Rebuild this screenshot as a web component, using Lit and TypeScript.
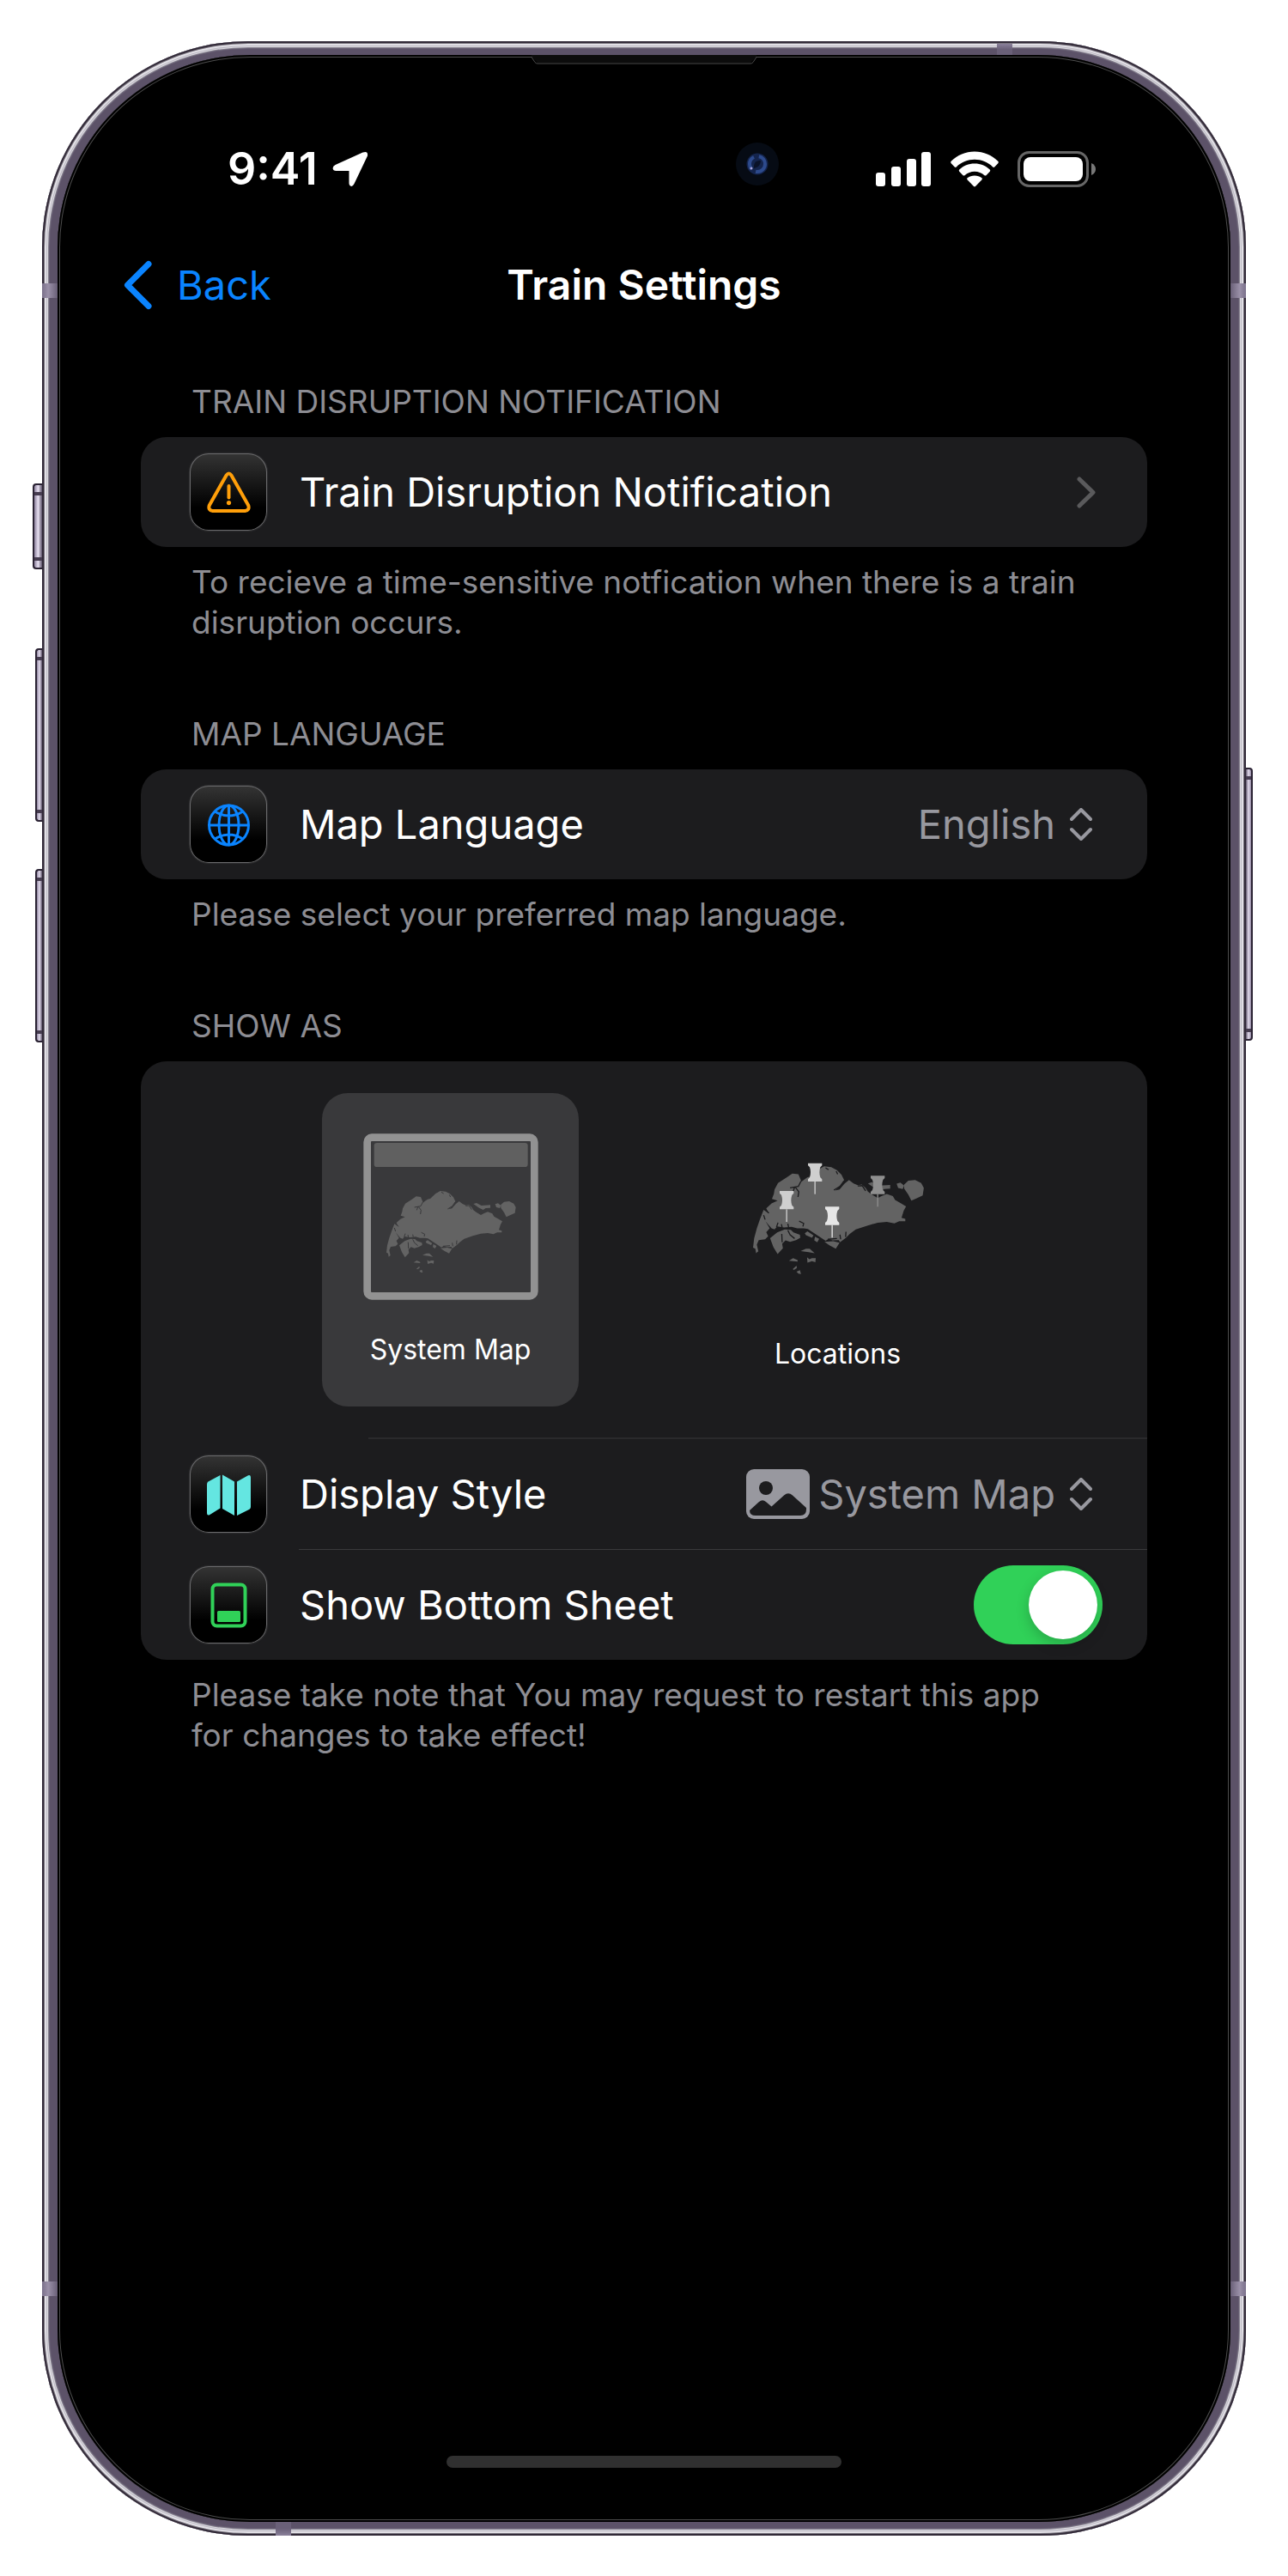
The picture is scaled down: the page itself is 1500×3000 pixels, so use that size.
import { LitElement, html, svg, css, type TemplateResult } from "lit";
import { customElement, property, state } from "lit/decorators.js";
import { classMap } from "lit/directives/class-map.js";

/* Outline of Singapore: main island, offshore islands and the inlets cut into the coast. */
const ISLANDS = [
  "M276 641 274 629 268 626 271 601 278 575 286 552 296 526 309 535 303 522 317 509 333 502 318 497 323 484 325 472 334 455 356 441 372 430 388 432 393 444 396 452 402 447 412 440 421 438 440 420 456 411 475 413 490 421 502 433 509 447 500 463 485 475 497 472 510 457 522 447 534 456 545 461 556 459 566 468 572 478 583 486 598 495 609 489 622 484 638 490 644 500 660 509 673 517 667 528 661 547 671 550 671 556 655 556 642 562 622 558 598 560 570 568 540 578 524 590 514 600 498 612 495 606 478 607 468 603 460 608 448 600 430 588 413 577 402 575 385 575 370 571 350 573 332 570 325 578 317 575 309 566 301 556 312 575 303 585 308 596 300 604 283 606 278 618 282 636Z",
  "M572 456 583 453 600 462 631 460 631 470 615 471 606 477 592 470Z",
  "M648 457 658 454 668 462 664 471 652 468Z",
  "M668 459 679 449 697 447 713 455 720 468 717 488 700 496 687 502 679 486 668 470Z",
  "M313 601 332 586 352 578 368 579 375 586 392 592 393 600 382 606 366 611 354 607 345 616 347 628 333 643 322 625Z",
  "M405 588 412 583 428 594 424 600 408 593Z",
  "M432 597 443 603 438 612 430 607Z",
  "M457 611 480 609 497 613 487 629 470 620Z",
  "M394 635 408 629 418 629 431 641 415 638Z",
  "M363 661 374 654 386 659 386 663Z",
  "M411 652 417 657 424 654 434 654 433 665 424 662 412 666Z",
  "M373 683 383 674 384 680 376 685Z",
  "M383 690 392 686 395 696 388 695Z",
].join("");
const INLETS =
  "M395 450 388 464 366 468M380 466 389 478 387 492M378 466 374 478M509 449 498 464 482 474M330 572 334 560M345 573 343 564M362 572 360 563M390 556 402 562 400 570M466 604 490 602M500 604 498 592M513 598 514 584M345 612 344 590M360 580 366 592 378 602M460 415 468 420M488 424 492 432M545 463 557 462 566 476M300 552 296 540M310 535 300 524";

const islandMap = svg`
  <path d=${ISLANDS} fill="#636363"></path>
  <path class="inlets" d=${INLETS} fill="none" stroke-width="3"></path>`;

const PINS = [
  { x: 302, y: 104, color: "#cfcfcf" },
  { x: 203, y: 201, color: "#cfcfcf" },
  { x: 362, y: 256, color: "#e6e6e6" },
  { x: 521, y: 148, color: "#8f8f8f" },
];

const systemMapArt = html`
  <svg class="art" width="204" height="194" viewBox="187 210 612 582" aria-hidden="true">
    <rect x="201" y="224" width="584" height="554" rx="16" fill="none" stroke="#929292" stroke-width="26"></rect>
    <rect x="225" y="243" width="537" height="84" rx="10" fill="#606060"></rect>
    ${islandMap}
  </svg>`;

const locationsArt = html`
  <svg class="art" width="204" height="204" viewBox="101 -15 612 612" aria-hidden="true">
    <g transform="translate(110 115) scale(1.32) translate(-268 -411)">${islandMap}</g>
    ${PINS.map(
      (p) => svg`
        <g transform="translate(${p.x} ${p.y})" fill=${p.color}>
          <path d="M0 0H49V8L43 14Q37 32 43 50L49 56V64H0V56L6 50Q12 32 6 14L0 8Z"></path>
          <rect x="22" y="64" width="5" height="44" opacity=".8"></rect>
        </g>`,
    )}
  </svg>`;

const icons: Record<string, TemplateResult> = {
  warning: html`
    <svg width="90" height="90" viewBox="0 0 90 90" fill="none" stroke="#ff9f0a" stroke-width="4" stroke-linecap="round" stroke-linejoin="round" aria-hidden="true">
      <path d="M42.600 25.400Q45.500 21.800 48.400 25.400L68.200 60.400Q70 66.500 64.500 67H26.500Q21 66.500 22.800 60.400Z"></path>
      <path d="M45.500 38V51.500"></path>
      <circle cx="45.500" cy="57.600" r="2.600" fill="#ff9f0a" stroke="none"></circle>
    </svg>`,
  globe: html`
    <svg width="90" height="90" viewBox="0 0 90 90" fill="none" stroke="#0a84ff" stroke-width="3" aria-hidden="true">
      <circle cx="45.500" cy="46" r="23"></circle>
      <ellipse cx="45.500" cy="46" rx="11.500" ry="23"></ellipse>
      <path d="M45.500 23V69M22.500 46H68.500M29 30Q45.500 40 62 30M29 62Q45.500 52 62 62"></path>
    </svg>`,
  map: html`
    <svg width="90" height="90" viewBox="0 0 90 90" fill="#64e6e1" aria-hidden="true">
      <path d="M35.500 23V61.500L23 69.300Q20 70.500 20 67V33.500Q20 31.500 21.500 30.500Z"></path>
      <path d="M38 22.500 52 30.500V70L38 62Z"></path>
      <path d="M55 70V30.500L68 23.300Q71 22.200 71 26V60Q71 61.800 69.500 62.800Z"></path>
    </svg>`,
  sheet: html`
    <svg width="90" height="90" viewBox="0 0 90 90" aria-hidden="true">
      <rect x="26.500" y="21.500" width="38" height="48" rx="5" fill="none" stroke="#30d158" stroke-width="4"></rect>
      <rect x="32" y="52" width="27" height="13" rx="1.500" fill="#30d158"></rect>
    </svg>`,
};

const upDown = html`
  <svg class="updown" width="26" height="38" viewBox="0 0 26 38" fill="none" stroke="#98989f" stroke-width="4" stroke-linecap="round" stroke-linejoin="round" aria-hidden="true">
    <path d="M2 13 13 2 24 13M2 25 13 36 24 25"></path>
  </svg>`;

@customElement("settings-section")
class SettingsSection extends LitElement {
  @property() heading = "";
  @property() note = "";

  static styles = css`
    :host {
      display: block;
    }
    .heading,
    .note {
      margin: 0;
      padding: 0 74px 0 59px;
      color: #8d8d93;
      font-size: 37px;
      font-weight: 400;
      line-height: 47px;
    }
    .heading {
      margin-bottom: 18px;
      text-transform: uppercase;
    }
    .note {
      margin-top: 17px;
    }
    .card {
      border-radius: 30px;
      background: #1c1c1e;
      overflow: hidden;
    }
  `;

  render() {
    return html`
      <section>
        <h2 class="heading">${this.heading}</h2>
        <div class="card"><slot></slot></div>
        <p class="note">${this.note}</p>
      </section>`;
  }
}

@customElement("app-icon")
class AppIcon extends LitElement {
  @property() name = "";

  static styles = css`
    :host {
      display: block;
      flex: none;
    }
    .badge {
      display: block;
      width: 90px;
      height: 90px;
      border-radius: 22px;
      background: linear-gradient(#343434, #000 70%);
      box-shadow: inset 0 0 0 1px #6a6a6c, 0 0 2px #58585a;
    }
    svg {
      display: block;
    }
  `;

  render() {
    return html`<span class="badge">${icons[this.name]}</span>`;
  }
}

@customElement("status-bar")
class StatusBar extends LitElement {
  static styles = css`
    :host {
      display: flex;
      align-items: center;
      justify-content: space-between;
      height: 72px;
      padding: 0 157px 0 198px;
    }
    .group {
      display: flex;
      align-items: center;
      gap: 22px;
    }
    .clock {
      gap: 17px;
    }
    .time {
      color: #fff;
      font-size: 52px;
      font-weight: 600;
      line-height: 60px;
    }
    svg {
      display: block;
    }
  `;

  render() {
    return html`
      <div class="group clock">
        <span class="time">9:41</span>
        <svg width="42" height="42" viewBox="0 0 42 42" fill="#fff" aria-hidden="true">
          <path d="M35.500 1.600Q41.800-.800 41 5.500L25.500 38Q23.500 42 21 40.500Q19.500 39.500 19.500 37.500V23H4.500Q.800 23 .600 20Q.600 17.500 3.500 16Z"></path>
        </svg>
      </div>
      <div class="group">
        <svg width="65" height="42" viewBox="0 0 65 42" fill="#fff" aria-hidden="true">
          <rect x="0" y="25" width="11" height="16" rx="3"></rect>
          <rect x="18" y="18" width="11" height="23" rx="3"></rect>
          <rect x="36" y="9" width="11" height="32" rx="3"></rect>
          <rect x="53" y="1" width="11" height="40" rx="3"></rect>
        </svg>
        <svg width="56" height="42" viewBox="0 0 56 42" fill="#fff" aria-hidden="true">
          <path d="M28 .500C38.500 .500 48 4.500 55.300 11.800Q56.300 13 55.300 14.200L51.200 18.500Q50.200 19.300 49.200 18.400C43.500 12.800 36 9.800 28 9.800S12.500 12.800 6.800 18.400Q5.800 19.300 4.800 18.500L.700 14.200Q-.300 13 .700 11.800C8 4.500 17.500 .500 28 .500Z"></path>
          <path d="M28 14.500C35 14.500 41 17 45.800 21.500Q46.800 22.700 45.800 23.800L41.500 28.200Q40.500 29 39.500 28.200C36.300 25.300 32.300 23.700 28 23.700S19.700 25.300 16.500 28.200Q15.500 29 14.500 28.200L10.200 23.800Q9.200 22.700 10.200 21.500C15 17 21 14.500 28 14.500Z"></path>
          <path d="M28 28.500C31.300 28.500 34 29.500 36.300 31.300Q37.300 32.300 36.300 33.400L29 41Q28 41.800 27 41L19.700 33.400Q18.700 32.300 19.700 31.300C22 29.500 24.700 28.500 28 28.500Z"></path>
        </svg>
        <svg width="91" height="42" viewBox="0 0 91 42" aria-hidden="true">
          <rect x="1.500" y="1.500" width="80" height="39" rx="12" fill="none" stroke="#666" stroke-width="3"></rect>
          <rect x="7" y="7" width="69" height="28" rx="8" fill="#fff"></rect>
          <path d="M86 14C89.500 15.500 91 18 91 21S89.500 26.500 86 28Z" fill="#777"></path>
        </svg>
      </div>`;
  }
}

@customElement("app-root")
class AppRoot extends LitElement {
  @state() private mapStyle = "System Map";
  @state() private showSheet = true;

  static styles = css`
    :host {
      display: flex;
      flex-direction: column;
      box-sizing: border-box;
      min-height: 100vh;
      padding: 48px 49px 47px;
      background: #fff;
      font-family: Inter, "Liberation Sans", sans-serif;
    }
    .phone {
      position: relative;
      flex: 1;
      display: flex;
      flex-direction: column;
      padding: 16px 18px;
      border-radius: 240px;
      background: #5c5268;
      box-shadow:
        inset 0 0 0 2px #322a38,
        inset 0 0 0 3px #77727c,
        inset 0 0 0 5px #e2e0e6,
        inset 0 0 0 6px #bdbac4,
        inset 0 0 0 7px #dcdae0,
        inset 0 0 0 8px #85808e,
        inset 0 0 0 9px #665d72;
    }
    .screen {
      position: relative;
      flex: 1;
      display: flex;
      flex-direction: column;
      padding-top: 97px;
      border-radius: 224px;
      background: #000;
      box-shadow: inset 0 0 0 2px #000, inset 0 0 0 3px #4c4c4c;
    }

    /* Hardware that sits over the edges of the casing */
    .key {
      position: absolute;
      box-sizing: border-box;
      border: 2px solid #2a2233;
      background: linear-gradient(90deg, #8e839e, #e6dff0 50%, #5c5268);
    }
    .key::before,
    .key::after {
      content: "";
      position: absolute;
      left: 0;
      right: 0;
      height: 4px;
      background: #463c50;
    }
    .key::before {
      top: 8px;
    }
    .key::after {
      bottom: 8px;
    }
    .left {
      right: 100%;
      width: 8px;
      border-right: 0;
      border-radius: 4px 0 0 4px;
    }
    .mute {
      top: 515px;
      width: 11px;
      height: 100px;
    }
    .louder {
      top: 707px;
      height: 202px;
    }
    .softer {
      top: 964px;
      height: 202px;
    }
    .power {
      top: 846px;
      left: 100%;
      width: 8px;
      height: 318px;
      border-left: 0;
      border-radius: 0 4px 4px 0;
      background: linear-gradient(90deg, #5c5268, #e6dff0 50%, #8e839e);
    }
    .band {
      position: absolute;
      width: 18px;
      height: 17px;
      background: linear-gradient(90deg, #7a708a, #9a90a8 40%, #6a6078);
    }
    .band.upper {
      top: 282px;
    }
    .band.lower {
      bottom: 279px;
    }
    .band.start {
      left: 0;
    }
    .band.end {
      right: 0;
      transform: scaleX(-1);
    }
    .band.ceiling {
      top: 3px;
      right: 272px;
      height: 13px;
      background: linear-gradient(#8a809a, #6a6078 50%);
    }
    .band.floor {
      bottom: 0;
      left: 272px;
      height: 16px;
      background: linear-gradient(#6a6078 50%, #8a809a);
    }
    .speaker {
      position: absolute;
      top: 0;
      left: 50%;
      transform: translateX(-50%);
    }
    .camera {
      position: absolute;
      top: 102px;
      left: calc(50% + 107px);
    }
    .speaker,
    .camera {
      display: block;
    }

    .nav {
      display: grid;
      grid-template-columns: 1fr auto 1fr;
      align-items: center;
      height: 72px;
      margin: 63px 0 76px;
      padding: 0 77px;
    }
    .back {
      display: flex;
      align-items: center;
      gap: 28px;
      justify-self: start;
      padding: 0;
      border: 0;
      background: none;
      color: #0a84ff;
      font: 400 47px/60px Inter, "Liberation Sans", sans-serif;
    }
    .title {
      margin: 0;
      color: #fff;
      font-size: 48px;
      font-weight: 600;
      line-height: 60px;
    }
    .list {
      display: flex;
      flex-direction: column;
      gap: 83px;
      padding: 0 97px;
    }
    .row {
      display: flex;
      align-items: center;
      gap: 38px;
      box-sizing: border-box;
      width: 100%;
      min-height: 128px;
      padding: 0 60px 0 57px;
      border: 0;
      background: none;
      color: #fff;
      font: 400 47px/60px Inter, "Liberation Sans", sans-serif;
      text-align: left;
    }
    .label {
      flex: 1;
    }
    .choice {
      display: flex;
      align-items: center;
      gap: 10px;
      margin-right: 4px;
    }
    .select {
      appearance: none;
      margin: 0;
      padding: 0;
      border: 0;
      outline: 0;
      background: none;
      color: #98989f;
      font: inherit;
      text-align-last: right;
    }
    .updown {
      margin-left: 7px;
    }
    .rule {
      margin: 0 0 0 184px;
      border: 0;
      border-top: 1px solid #3a3a3c;
    }
    .rule.deep {
      margin-left: 265px;
      border-top: 2px solid #2a2a2c;
    }
    .picker {
      display: flex;
      align-items: center;
      justify-content: space-evenly;
      min-height: 438px;
      padding: 0 59px;
    }
    .tile {
      display: flex;
      flex-direction: column;
      align-items: center;
      gap: 38px;
      width: 299px;
      padding: 47px 0 46px;
      border: 0;
      border-radius: 30px;
      background: none;
      color: #fff;
      font: 400 32px/40px Inter, "Liberation Sans", sans-serif;
    }
    .inlets {
      stroke: #1c1c1e;
    }
    .tile.chosen {
      background: #39393b;
    }
    .tile.chosen .inlets {
      stroke: #39393b;
    }
    .art {
      display: block;
    }
    .switch {
      appearance: none;
      flex: none;
      display: flex;
      align-items: center;
      box-sizing: border-box;
      width: 150px;
      height: 92px;
      margin: 0 -8px 0 0;
      padding: 6px;
      border-radius: 46px;
      background: #39393d;
    }
    .switch::before {
      content: "";
      width: 80px;
      height: 80px;
      border-radius: 50%;
      background: #fff;
      box-shadow: 0 6px 16px rgba(0, 0, 0, 0.2);
    }
    .switch:checked {
      justify-content: flex-end;
      background: #30d158;
    }
    .home {
      width: 460px;
      height: 14px;
      margin: auto auto 63px;
      border-radius: 7px;
      background: #303030;
    }
  `;

  private tile(name: string, art: TemplateResult) {
    const chosen = this.mapStyle === name;
    return html`
      <button
        class=${classMap({ tile: true, chosen })}
        type="button"
        aria-pressed=${chosen ? "true" : "false"}
        @click=${() => (this.mapStyle = name)}
      >
        ${art}<span>${name}</span>
      </button>`;
  }

  render() {
    return html`
      <div class="phone">
        <span class="key left mute"></span>
        <span class="key left louder"></span>
        <span class="key left softer"></span>
        <span class="key power"></span>
        <span class="band upper start"></span>
        <span class="band upper end"></span>
        <span class="band lower start"></span>
        <span class="band lower end"></span>
        <span class="band ceiling"></span>
        <span class="band floor"></span>

        <div class="screen">
          <svg class="speaker" width="262" height="11" viewBox="0 0 262 11" aria-hidden="true">
            <path d="M0 0H262V2L255 9H7L0 2Z" fill="#0c0c0c"></path>
            <path d="M0 2.500 4 8.500Q5 10 7 10H255Q257 10 258 8.500L262 2.500" fill="none" stroke="#4c4c4c"></path>
          </svg>
          <svg class="camera" width="50" height="50" viewBox="0 0 50 50" aria-hidden="true">
            <circle cx="25" cy="25" r="25" fill="#060b14"></circle>
            <circle cx="25" cy="25" r="12.500" fill="#14244c"></circle>
            <circle cx="25" cy="25" r="9" fill="none" stroke="#2d4a8c" stroke-width="4" stroke-dasharray="16 6"></circle>
            <path d="M21 27Q22 20 29 21Q29 28 21 30Z" fill="#0a1228"></path>
            <circle cx="18" cy="30" r="1.500" fill="#a9a4dc"></circle>
          </svg>

          <status-bar></status-bar>

          <header class="nav">
            <button class="back" type="button">
              <svg width="34" height="58" viewBox="0 0 34 58" fill="none" stroke="#0a84ff" stroke-width="7" stroke-linecap="round" stroke-linejoin="round" aria-hidden="true">
                <path d="M29 4.500 4.500 29 29 53.500"></path>
              </svg>
              <span>Back</span>
            </button>
            <h1 class="title">Train Settings</h1>
          </header>

          <main class="list">
            <settings-section
              heading="Train Disruption Notification"
              note="To recieve a time-sensitive notfication when there is a train disruption occurs."
            >
              <button class="row" type="button">
                <app-icon name="warning"></app-icon>
                <span class="label">Train Disruption Notification</span>
                <svg width="22" height="37" viewBox="0 0 22 37" fill="none" stroke="#5a5a5c" stroke-width="5" stroke-linecap="round" stroke-linejoin="round" aria-hidden="true">
                  <path d="M3 3 19 18.500 3 34"></path>
                </svg>
              </button>
            </settings-section>

            <settings-section heading="Map Language" note="Please select your preferred map language.">
              <div class="row">
                <app-icon name="globe"></app-icon>
                <label class="label" for="language">Map Language</label>
                <span class="choice">
                  <select class="select" id="language">
                    <option>English</option>
                  </select>
                  ${upDown}
                </span>
              </div>
            </settings-section>

            <settings-section
              heading="Show As"
              note="Please take note that You may request to restart this app for changes to take effect!"
            >
              <div class="picker">
                ${this.tile("System Map", systemMapArt)} ${this.tile("Locations", locationsArt)}
              </div>
              <hr class="rule deep" />
              <div class="row">
                <app-icon name="map"></app-icon>
                <label class="label" for="display">Display Style</label>
                <span class="choice">
                  <svg width="74" height="58" viewBox="0 0 74 58" aria-hidden="true">
                    <rect width="74" height="58" rx="9" fill="#98989f"></rect>
                    <ellipse cx="23" cy="22" rx="8" ry="8" fill="#1c1c1e"></ellipse>
                    <path d="M4 48 15 38Q19 34.500 23 38L29.500 43.500 44 30.500Q49 26 54 30.500L70 45V47Q70 54 63 54H11Q4 54 4 48Z" fill="#1c1c1e"></path>
                  </svg>
                  <select
                    class="select"
                    id="display"
                    .value=${this.mapStyle}
                    @change=${(e: Event) => (this.mapStyle = (e.target as HTMLSelectElement).value)}
                  >
                    <option>System Map</option>
                    <option>Locations</option>
                  </select>
                  ${upDown}
                </span>
              </div>
              <hr class="rule" />
              <div class="row">
                <app-icon name="sheet"></app-icon>
                <label class="label" for="sheet">Show Bottom Sheet</label>
                <input
                  class="switch"
                  id="sheet"
                  type="checkbox"
                  role="switch"
                  .checked=${this.showSheet}
                  @change=${(e: Event) => (this.showSheet = (e.target as HTMLInputElement).checked)}
                />
              </div>
            </settings-section>
          </main>

          <div class="home"></div>
        </div>
      </div>`;
  }
}
